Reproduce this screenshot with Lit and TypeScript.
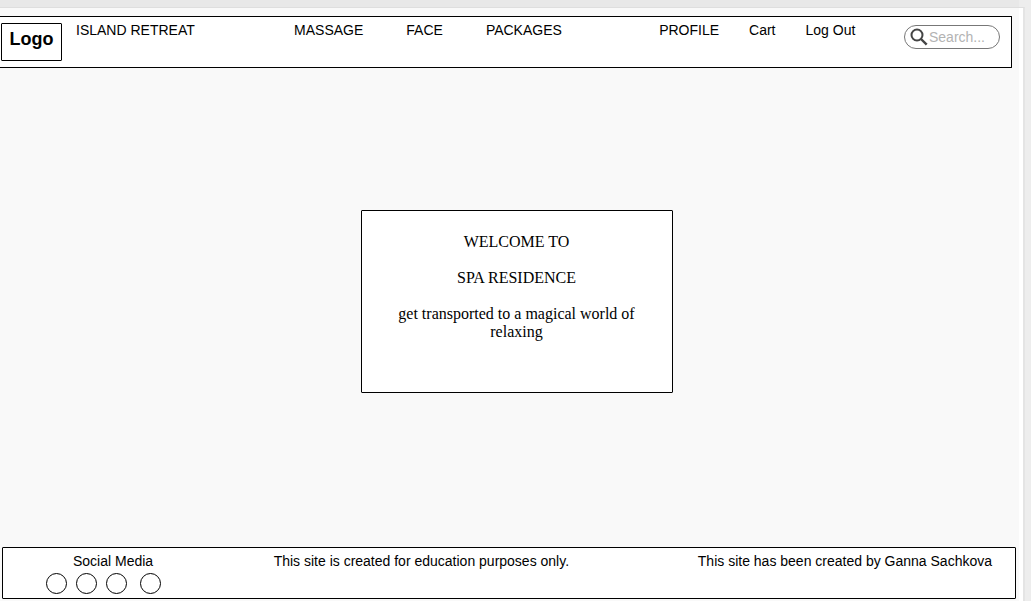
import { LitElement, html, css } from "lit";
import { customElement } from "lit/decorators.js";

@customElement("app-root")
export class AppRoot extends LitElement {
  static styles = css`
    :host {
      display: flex;
      flex-direction: column;
      box-sizing: border-box;
      min-height: 100vh;
      background: #ededed;
      color: #000;
      font: 14px/16px "Liberation Sans", Arial, sans-serif;
    }
    * {
      box-sizing: border-box;
    }
    a {
      color: inherit;
      text-decoration: none;
      white-space: nowrap;
    }
    .strip {
      height: 7px;
      margin-right: 12px;
      background: #e8e8e8;
    }
    .frame {
      flex: 1;
      display: flex;
      margin-right: 6px;
      padding-right: 4px;
      border-top: 1px solid #dedede;
      border-right: 2px solid #e4e4e4;
      background: #fff;
    }
    .page {
      flex: 1;
      display: flex;
      flex-direction: column;
      padding: 8px 0 2px;
      background: #f9f9f9;
    }
    .header {
      display: grid;
      grid-template-columns: auto auto 2fr auto 2fr auto 1fr auto;
      align-items: start;
      min-height: 52px;
      margin-right: 7px;
      padding: 5px 11px 6px 1px;
      border: 1px solid #000;
      border-left: 0;
      border-radius: 0 1px 1px 0;
      background: #fff;
    }
    .logo {
      width: 61px;
      height: 38px;
      margin: 1px 14px 0 0;
      padding-top: 5px;
      border: 1px solid #000;
      border-radius: 1px;
      font-size: 18px;
      line-height: 20px;
      font-weight: bold;
      text-align: center;
    }
    .menu {
      display: flex;
    }
    .services {
      grid-column: 4;
      gap: 43px;
      padding-left: 2px;
    }
    .account {
      grid-column: 6;
      gap: 30px;
    }
    .search {
      grid-column: 8;
      display: flex;
      align-items: center;
      gap: 1px;
      width: 96px;
      height: 24px;
      margin-top: 3px;
      padding: 0 5px;
      border: 1px solid #777;
      border-radius: 12px;
    }
    .search svg {
      flex: none;
    }
    .search input {
      flex: 1;
      min-width: 0;
      padding: 0;
      border: 0;
      outline: 0;
      background: none;
      font: inherit;
      appearance: none;
    }
    .search input::-webkit-search-cancel-button {
      display: none;
    }
    .search input::placeholder {
      color: #b3b3b3;
      opacity: 1;
    }
    .main {
      flex: 1;
      display: grid;
      place-items: center;
      padding: 0 0 12px 14px;
    }
    .welcome {
      width: 312px;
      min-height: 183px;
      padding: 22px 30px;
      border: 1px solid #000;
      border-radius: 1px;
      background: #fff;
      font: 16px/18px "Liberation Serif", "Times New Roman", serif;
      text-align: center;
    }
    .welcome h1,
    .welcome p {
      margin: 0 0 18px;
      font: inherit;
    }
    .footer {
      display: grid;
      grid-template-columns: auto 7fr auto 8fr auto;
      min-height: 52px;
      margin: 0 3px 0 2px;
      padding: 5px 23px 3px 43px;
      border: 1px solid #000;
      border-radius: 1px;
      background: #fff;
    }
    .footer p {
      margin: 0;
    }
    .social p {
      padding-left: 27px;
    }
    .links {
      display: flex;
      gap: 9px;
      margin-top: 4px;
    }
    .links a {
      width: 21px;
      height: 21px;
      border: 1px solid #000;
      border-radius: 50%;
    }
    .links a:last-child {
      margin-left: 4px;
    }
    .purpose {
      grid-column: 3;
    }
    .credit {
      grid-column: 5;
    }
  `;

  private services = ["MASSAGE", "FACE", "PACKAGES"];
  private account = ["PROFILE", "Cart", "Log Out"];
  private networks = ["Facebook", "Instagram", "Twitter", "YouTube"];

  render() {
    return html`
      <div class="strip"></div>
      <div class="frame">
        <div class="page">
          <header class="header">
            <a class="logo" href="#">Logo</a>
            <a href="#">ISLAND RETREAT</a>
            <nav class="menu services">
              ${this.services.map((item) => html`<a href="#">${item}</a>`)}
            </nav>
            <nav class="menu account">
              ${this.account.map((item) => html`<a href="#">${item}</a>`)}
            </nav>
            <label class="search">
              <svg width="18" height="18" viewBox="0 0 18 18" fill="none" stroke="#444" aria-hidden="true">
                <circle cx="7" cy="7" r="5.5" stroke-width="2" />
                <path d="M11 11 L16.7 16.7" stroke-width="2.4" />
              </svg>
              <input type="search" placeholder="Search..." aria-label="Search" />
            </label>
          </header>
          <main class="main">
            <section class="welcome">
              <h1>WELCOME TO</h1>
              <p>SPA RESIDENCE</p>
              <p>get transported to a magical world of relaxing</p>
            </section>
          </main>
          <footer class="footer">
            <div class="social">
              <p>Social Media</p>
              <div class="links">
                ${this.networks.map((name) => html`<a href="#" aria-label=${name}></a>`)}
              </div>
            </div>
            <p class="purpose">This site is created for education purposes only.</p>
            <p class="credit">This site has been created by Ganna Sachkova</p>
          </footer>
        </div>
      </div>
    `;
  }
}
